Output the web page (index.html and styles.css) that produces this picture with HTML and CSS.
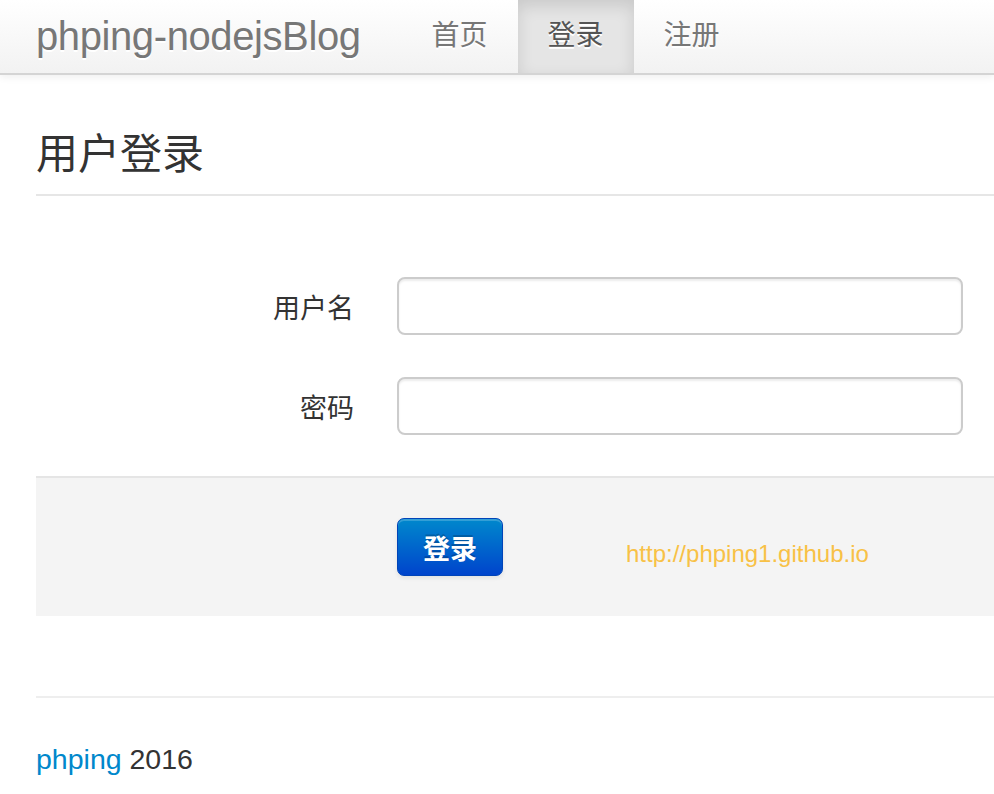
FILE: index.html
```html
<!DOCTYPE html>
<html lang="zh-CN">
<head>
<meta charset="utf-8">
<title>phping-nodejsBlog</title>
<link rel="stylesheet" href="styles.css">
</head>
<body>
<header class="navbar">
  <a class="brand" href="#">phping-nodejsBlog</a>
  <ul class="nav">
    <li><a href="#">首页</a></li>
    <li class="active"><a href="#">登录</a></li>
    <li><a href="#">注册</a></li>
  </ul>
</header>
<main class="container">
  <div class="page-header">
    <h1>用户登录</h1>
  </div>
  <form class="form-horizontal">
    <div class="control-group">
      <label class="control-label" for="username">用户名</label>
      <input class="input" id="username" type="text">
    </div>
    <div class="control-group">
      <label class="control-label" for="password">密码</label>
      <input class="input" id="password" type="password">
    </div>
    <div class="form-actions">
      <button class="btn-primary" type="button">登录</button>
      <span class="site-link">http://phping1.github.io</span>
    </div>
  </form>
  <hr class="footer-rule">
  <footer class="footer">
    <a href="#" class="footer-link">phping</a> 2016
  </footer>
</main>
</body>
</html>
```

FILE: styles.css
```css
html, body {
  margin: 0;
  padding: 0;
  background: #fff;
}
body {
  font-family: "Liberation Sans", Arial, "Noto Sans CJK SC", sans-serif;
  color: #333;
  overflow: hidden;
}
a { text-decoration: none; }

.navbar {
  display: flex;
  align-items: stretch;
  height: 73px;
  padding-left: 36px;
  background: linear-gradient(to bottom, #ffffff, #f2f2f2);
  border-bottom: 2px solid #d4d4d4;
  box-shadow: 0 2px 8px rgba(0, 0, 0, 0.07);
}
.brand {
  display: block;
  line-height: 72px;
  font-size: 40px;
  letter-spacing: -0.4px;
  color: #777;
  text-shadow: 0 2px 0 #fff;
  margin-right: 41px;
}
.nav {
  display: flex;
  margin: 0;
  padding: 0;
  list-style: none;
}
.nav li a {
  display: block;
  padding: 0 30px;
  line-height: 72px;
  height: 73px;
  font-size: 28px;
  color: #777;
  text-shadow: 0 2px 0 #fff;
}
.nav li.active a {
  background: #e5e5e5;
  color: #555;
  box-shadow: inset 0 6px 16px rgba(0, 0, 0, 0.12);
}

.container {
  padding-left: 36px;
}
.page-header {
  margin-top: 59px;
  padding-bottom: 18px;
  border-bottom: 2px solid #e6e6e6;
}
.page-header h1 {
  margin: 0;
  font-size: 42px;
  line-height: 42px;
  font-weight: normal;
  color: #333;
}

.form-horizontal {
  margin-top: 81px;
}
.control-group {
  display: flex;
  align-items: center;
  margin-bottom: 42px;
}
.control-label {
  width: 318px;
  text-align: right;
  font-size: 27px;
  color: #333;
  margin-right: 43px;
}
.input {
  box-sizing: border-box;
  width: 566px;
  height: 58px;
  border: 2px solid #ccc;
  border-radius: 8px;
  box-shadow: inset 0 2px 2px rgba(0, 0, 0, 0.075);
  background: #fff;
  margin: 0;
  font-size: 28px;
}
.form-actions {
  display: flex;
  align-items: center;
  height: 140px;
  box-sizing: border-box;
  margin-top: -1px;
  padding-left: 361px;
  background: #f4f4f4;
  border-top: 2px solid #e5e5e5;
}
.btn-primary {
  box-sizing: border-box;
  width: 106px;
  height: 58px;
  padding: 0;
  border: 1px solid #0044b8;
  border-radius: 7px;
  background: linear-gradient(to bottom, #0088cc, #0044cc);
  color: #fff;
  font-family: "Liberation Sans", Arial, "Noto Sans CJK SC", sans-serif;
  font-size: 27px;
  font-weight: bold;
  text-shadow: 0 -2px 0 rgba(0, 0, 0, 0.2);
  box-shadow: inset 0 2px 0 rgba(255, 255, 255, 0.2), 0 2px 4px rgba(0, 0, 0, 0.08);
}
.site-link {
  margin-left: 123px;
  margin-top: 14px;
  font-size: 24px;
  color: #f8c146;
}

.footer-rule {
  margin: 80px 0 0;
  border: 0;
  border-top: 2px solid #eee;
}
.footer {
  margin-top: 41px;
  font-size: 28.5px;
  line-height: 40px;
  color: #333;
}
.footer-link {
  color: #0088cc;
}
```
